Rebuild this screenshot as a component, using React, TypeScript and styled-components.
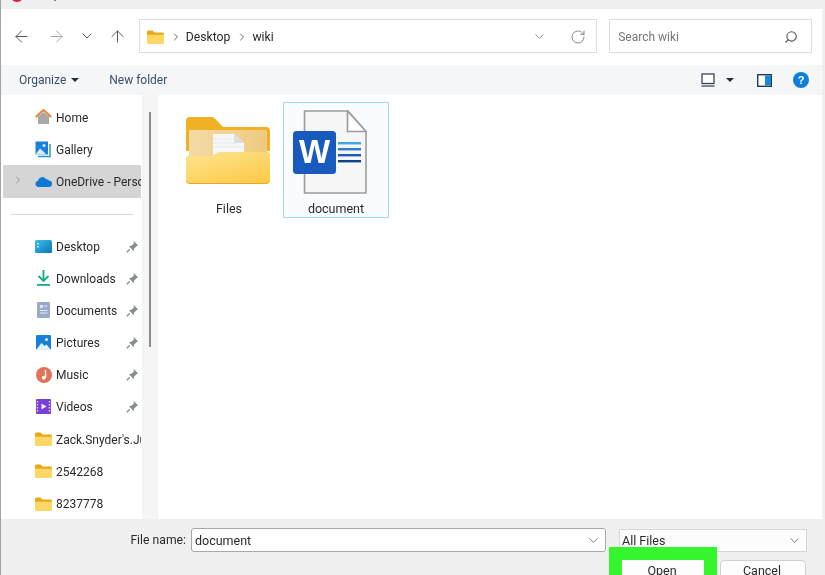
import styled, { createGlobalStyle } from "styled-components";
import { ArrowLeft, ArrowRight, ArrowUp, ChevronDown, ChevronRight, RotateCw, Search } from "lucide-react";

const GlobalStyle = createGlobalStyle`
  html, body {
    margin: 0;
    padding: 0;
    background: #f0f0f0;
  }
  * {
    box-sizing: border-box;
  }
`;

const Window = styled.div`
  position: relative;
  display: flex;
  flex-direction: column;
  width: 825px;
  height: 575px;
  overflow: hidden;
  padding-right: 3px;
  border-left: 1px solid #a2a2a2;
  background: #f0f0f0;
  color: #2a2a2a;
  font-family: Roboto, "Liberation Sans", sans-serif;
  font-size: 12.5px;
  filter: blur(0.35px);
`;

const TitleBar = styled.div`
  display: flex;
  gap: 21px;
  height: 9px;
  overflow: hidden;
  padding-left: 9px;
  background: #f0f0f0;
`;

const AppDot = styled.div`
  width: 14px;
  height: 14px;
  margin-top: -12px;
  border-radius: 50%;
  background: #d81e4a;
`;

const TitleText = styled.div`
  margin-top: -14px;
  line-height: 16px;
`;

const NavRow = styled.div`
  display: flex;
  align-items: center;
  height: 56px;
  padding: 0 10px 2px 0;
  background: #fff;
  font-size: 12px;
`;

const NavButton = styled.div<{ $w: number; $faded?: boolean }>`
  display: flex;
  justify-content: center;
  width: ${(p) => p.$w}px;
  color: ${(p) => (p.$faded ? "#a3a3a3" : "#4f4f4f")};
`;

const AddressBar = styled.div`
  display: flex;
  align-items: center;
  width: 459px;
  height: 34px;
  margin-left: 6px;
  padding: 1px 10px 0 7px;
  border: 1px solid #dedede;
  font-size: 12.2px;
`;

const Crumb = styled.span`
  display: flex;
  margin-left: 6px;
  margin-right: 4px;
`;

const Spacer = styled.div`
  flex: 1;
`;

const RefreshGap = styled.div`
  flex: none;
  width: 23px;
`;

const SearchBox = styled.div`
  display: flex;
  align-items: center;
  justify-content: space-between;
  width: 203px;
  height: 34px;
  margin-left: 12px;
  padding: 1px 13px 0 8px;
  border: 1px solid #dedede;
  color: #777;
`;

const MirroredSearch = styled(Search)`
  transform: scaleX(-1);
`;

const Toolbar = styled.div`
  display: flex;
  align-items: center;
  height: 30px;
  padding: 0 13px 0 18px;
  background: #f5f6f7;
  color: #37506b;
  font-size: 12px;
`;

const ToolLabel = styled.span`
  margin-right: 30px;
  display: flex;
  align-items: center;
  gap: 5px;
`;

const Caret = styled.span`
  width: 0;
  height: 0;
  border-left: 4px solid transparent;
  border-right: 4px solid transparent;
  border-top: 4px solid #1f3147;
`;

const ToolIcons = styled.div`
  display: flex;
  align-items: center;

  ${Caret} {
    margin: 0 23px 0 11px;
  }
`;

const HelpGap = styled.div`
  width: 21px;
`;

const Main = styled.div`
  display: flex;
  flex: 1;
  min-height: 0;
  background: #fff;
`;

const Sidebar = styled.nav`
  width: 141px;
  padding-top: 6px;
  overflow: hidden;
  background: #fff;
  font-size: 12px;
`;

const NavItem = styled.div<{ $selected?: boolean }>`
  position: relative;
  display: flex;
  align-items: center;
  height: 32.2px;
  margin-left: 2px;
  margin-right: 1px;
  padding-left: 32px;
  background: ${(p) => (p.$selected ? "#d5d5d5" : "transparent")};
  white-space: nowrap;
  overflow: hidden;
`;

const ItemIcon = styled.div`
  display: flex;
  flex: none;
  justify-content: center;
  width: 17px;
  margin-right: 4px;
`;

const ItemLabel = styled.span`
  flex: 1;
  min-width: 0;
  padding-top: 1px;
  overflow: hidden;
`;

const Expander = styled.div`
  position: absolute;
  left: 9px;
  top: 9px;
  color: #8a8a8a;
`;

const PinSlot = styled.div`
  flex: none;
  width: 13px;
  margin-left: 3px;
  margin-right: 2px;
  display: flex;
`;

const Separator = styled.div`
  height: 32.4px;
  display: flex;
  align-items: center;
  padding: 2px 8px 0 10px;

  &::after {
    content: "";
    flex: 1;
    height: 1px;
    background: #d9d9d9;
  }
`;

const ScrollTrack = styled.div`
  display: flex;
  justify-content: center;
  width: 16px;
  padding-top: 17px;
  background: #f5f5f5;
`;

const ScrollThumb = styled.div`
  width: 2px;
  height: 235px;
  background: #8b8b8b;
`;

const Files = styled.div`
  display: flex;
  flex: 1;
  align-items: flex-start;
  gap: 1px;
  padding: 7px 0 0 18px;
`;

const Tile = styled.div<{ $selected?: boolean }>`
  display: flex;
  flex-direction: column;
  align-items: center;
  justify-content: space-between;
  width: 106px;
  height: 116px;
  padding-top: ${(p) => (p.$selected ? "7px" : "14px")};
  border: 1px solid ${(p) => (p.$selected ? "#a6d8ef" : "transparent")};
  background: ${(p) => (p.$selected ? "#f8fcfe" : "transparent")};
`;

const TileArt = styled.div<{ $shift: number }>`
  display: flex;
  margin-left: ${(p) => p.$shift}px;
`;

const TileLabel = styled.span`
  line-height: 16px;
`;

const Footer = styled.div`
  display: flex;
  flex-direction: column;
  height: 56px;
  padding-top: 9px;
  background: #f0f0f0;
`;

const FieldRow = styled.div`
  display: flex;
  align-items: center;
  height: 24px;
  padding-left: 129px;
`;

const FieldLabel = styled.label`
  width: 56px;
  margin-right: 5px;
  text-align: right;
  white-space: nowrap;
  font-size: 12.2px;
`;

const NameInput = styled.div`
  display: flex;
  align-items: center;
  justify-content: space-between;
  width: 415px;
  height: 24px;
  padding: 1px 4px 0 3px;
  border: 1px solid #a8a8a8;
  border-radius: 3px;
  background: #fff;
  color: #666;

  span {
    color: #2a2a2a;
  }
`;

const TypeSelect = styled.div`
  display: flex;
  align-items: center;
  justify-content: space-between;
  width: 188px;
  height: 23px;
  margin-left: 13px;
  padding: 0 4px 0 2px;
  border: 1px solid #d6d6d6;
  background: #fcfcfc;
  color: #666;

  span {
    color: #2a2a2a;
  }
`;

const ButtonRow = styled.div`
  display: flex;
  margin-top: 8px;
  padding-left: 621px;
`;

const DialogButton = styled.button<{ $w: number; $highlight?: boolean }>`
  width: ${(p) => p.$w}px;
  height: 22px;
  flex: none;
  padding: 0 2px 2px 0;
  border: 1px solid ${(p) => (p.$highlight ? "#fff" : "#d0d0d0")};
  border-radius: ${(p) => (p.$highlight ? "0" : "4px")};
  background: #fdfdfd;
  color: #2a2a2a;
  font: inherit;
  margin-right: 16px;
  box-shadow: ${(p) => (p.$highlight ? "0 0 0 13px #35f52e" : "none")};
`;

const FolderSmall = () => (
  <svg width="17" height="14" viewBox="0 0 17 14">
    <path d="M0 2a1.500 1.500 0 0 1 1.500-1.500h4l2 2H15.500a1.500 1.500 0 0 1 1.500 1.500V6H0z" fill="#e8a917" />
    <path d="M0 4.800h17v7.700a1.500 1.500 0 0 1-1.500 1.500h-14A1.500 1.500 0 0 1 0 12.500z" fill="#fdd765" />
  </svg>
);

const HomeIcon = () => (
  <svg width="17" height="16" viewBox="0 0 17 16">
    <path d="M3 7.500 8.500 3 14 7.500V15H3z" fill="#a8a8a8" />
    <path d="M0.800 8 8.500 1l7.700 7" fill="none" stroke="#e5853a" strokeWidth="2" />
  </svg>
);

const GalleryIcon = () => (
  <svg width="17" height="17" viewBox="0 0 17 17">
    <rect x="0.500" y="0.500" width="12.500" height="13" fill="#1b80dc" />
    <path d="M0.500 13.500 5 7.500l4 3.500 2 2.500z" fill="#d7ecfb" />
    <circle cx="9" cy="4.500" r="1.500" fill="#d7ecfb" />
    <path d="M15 3v12.500H3" fill="none" stroke="#2b8fe0" strokeWidth="1.500" />
  </svg>
);

const CloudIcon = () => (
  <svg width="17" height="11" viewBox="0 0 17 11">
    <path d="M3.500 11a3.200 3.200 0 0 1-.6-6.300A4.500 4.500 0 0 1 11 3a3.800 3.800 0 0 1 3 1.500A3.200 3.200 0 0 1 17 8c0 1.800-1.300 3-3 3z" fill="#0f78d4" />
  </svg>
);

const DesktopIcon = () => (
  <svg width="17" height="13" viewBox="0 0 17 13">
    <defs>
      <linearGradient id="desk" x1="0" y1="0" x2="1" y2="1">
        <stop offset="0" stopColor="#3cc1e8" />
        <stop offset="1" stopColor="#0c74b8" />
      </linearGradient>
    </defs>
    <rect width="17" height="13" rx="1.500" fill="url(#desk)" />
    <rect x="2" y="3" width="2" height="1.500" fill="#b9e8f6" />
    <rect x="2" y="6" width="2" height="1.500" fill="#b9e8f6" />
  </svg>
);

const DownloadIcon = () => (
  <svg width="15" height="16" viewBox="0 0 15 16">
    <path d="M7.500 0v10M2.500 6l5 5 5-5" fill="none" stroke="#1aa88a" strokeWidth="1.800" />
    <rect x="1" y="14" width="13" height="1.800" fill="#1aa88a" />
  </svg>
);

const DocumentsIcon = () => (
  <svg width="13" height="16" viewBox="0 0 13 16">
    <rect width="13" height="16" rx="1" fill="#98abc8" />
    <rect x="3" y="3" width="3" height="3" fill="#e2e8f2" />
    <path d="M7 4h3.500M3 8.500h7.500M3 11h7.500" stroke="#e2e8f2" strokeWidth="1" />
  </svg>
);

const PicturesIcon = () => (
  <svg width="15" height="15" viewBox="0 0 15 15">
    <rect width="15" height="15" rx="1" fill="#1780dc" />
    <path d="M0 15 5.500 8l3 3 2-1.500L15 15z" fill="#e2f1fc" />
    <circle cx="10.500" cy="4.500" r="1.500" fill="#e2f1fc" />
  </svg>
);

const MusicIcon = () => (
  <svg width="16" height="16" viewBox="0 0 16 16">
    <circle cx="8" cy="8" r="8" fill="#e2735a" />
    <path d="M9.500 3v7.500" stroke="#fff" strokeWidth="1.400" />
    <circle cx="7.800" cy="10.800" r="1.900" fill="#fff" />
  </svg>
);

const VideosIcon = () => (
  <svg width="15" height="15" viewBox="0 0 15 15">
    <rect width="15" height="15" rx="1" fill="#7a3fd6" />
    <path d="M5.500 4.500v6l5-3z" fill="#f3e8ff" />
    <path d="M1.500 2v11M13.500 2v11" stroke="#e4d3fb" strokeWidth="1.400" strokeDasharray="1.500 1.500" />
  </svg>
);

const PinIcon = () => (
  <svg width="13" height="13" viewBox="0 0 12 12">
    <path d="M7 .8 11.200 5l-1.300.6-2.300 2.300-.4 2.400-4.500-4.500 2.400-.4 2.300-2.300z" fill="#868c92" />
    <path d="M3.500 8.500.8 11.200" stroke="#868c92" strokeWidth="1.300" />
  </svg>
);

const FolderLarge = () => (
  <svg width="84" height="67" viewBox="0 0 84 67">
    <defs>
      <linearGradient id="front" x1="0.200" y1="0" x2="0.900" y2="1">
        <stop offset="0" stopColor="#fee28a" />
        <stop offset="1" stopColor="#fcca47" />
      </linearGradient>
      <linearGradient id="inner" x1="0" y1="0" x2="1" y2="0">
        <stop offset="0" stopColor="#f3dba6" />
        <stop offset="1" stopColor="#eeca80" />
      </linearGradient>
    </defs>
    <path d="M0 4a4 4 0 0 1 4-4h22a4 4 0 0 1 3 1.500L37 10h43a4 4 0 0 1 4 4v20H0z" fill="#f0b224" />
    <rect x="3" y="13" width="78" height="30" rx="1" fill="url(#inner)" />
    <path d="M27 17h21l10 9v17H27z" fill="#f7f7f7" />
    <path d="M48 17v9h10z" fill="#dedede" />
    <path d="M27 22h24M27 26h24M27 30h30" stroke="#e6e9ee" strokeWidth="1" />
    <path d="M0 63V43a4 4 0 0 1 4-4h23l6-4h47a4 4 0 0 1 4 4v24a4 4 0 0 1-4 4H4a4 4 0 0 1-4-4z" fill="#e4a92a" />
    <path d="M0 62V43a4 4 0 0 1 4-4h23l6-4h47a4 4 0 0 1 4 4v23a4 4 0 0 1-4 4H4a4 4 0 0 1-4-4z" fill="url(#front)" />
  </svg>
);

const WordFile = () => (
  <svg width="74" height="84" viewBox="0 0 74 84" fontFamily="'Liberation Sans', sans-serif">
    <path d="M11.500 1h43.500L73 21.500V83H11.500z" fill="#f6f6f6" stroke="#9c9c9c" strokeWidth="1.600" />
    <path d="M54.500 1v20.500H73z" fill="#fff" stroke="#9c9c9c" strokeWidth="1.600" />
    <rect x="0" y="21" width="43" height="43" rx="3.500" fill="#185abd" />
    <text x="21.500" y="53" textAnchor="middle" fill="#fff" fontSize="33" fontWeight="700">W</text>
    <rect x="45" y="32" width="23" height="2.400" fill="#41a5ee" />
    <rect x="45" y="38" width="23" height="2.400" fill="#2b7cd3" />
    <rect x="45" y="44" width="23" height="2.400" fill="#185abd" />
    <rect x="45" y="50" width="23" height="2.400" fill="#103f91" />
  </svg>
);

const ViewIcon = () => (
  <svg width="14" height="14" viewBox="0 0 14 14">
    <rect x="1" y="1" width="12" height="9.500" fill="#fff" stroke="#2b3a4a" strokeWidth="1.200" />
    <path d="M0.500 13h13" stroke="#2b3a4a" strokeWidth="1.200" />
  </svg>
);

const PaneIcon = () => (
  <svg width="15" height="13" viewBox="0 0 15 13">
    <rect x="0.700" y="0.700" width="13.600" height="11.600" fill="#fff" stroke="#1f3a5a" strokeWidth="1.400" />
    <rect x="8" y="1.400" width="6" height="10.200" fill="#1e88d8" />
  </svg>
);

const HelpIcon = () => (
  <svg width="16" height="16" viewBox="0 0 16 16" fontFamily="'Liberation Sans', sans-serif">
    <circle cx="8" cy="8" r="8" fill="#0f7fd8" />
    <text x="8" y="12" textAnchor="middle" fill="#fff" fontSize="11" fontWeight="700">?</text>
  </svg>
);

const quickAccess = [
  { label: "Desktop", icon: <DesktopIcon />, pinned: true },
  { label: "Downloads", icon: <DownloadIcon />, pinned: true },
  { label: "Documents", icon: <DocumentsIcon />, pinned: true },
  { label: "Pictures", icon: <PicturesIcon />, pinned: true },
  { label: "Music", icon: <MusicIcon />, pinned: true },
  { label: "Videos", icon: <VideosIcon />, pinned: true },
  { label: "Zack.Snyder's.Justice.League", icon: <FolderSmall /> },
  { label: "2542268", icon: <FolderSmall /> },
  { label: "8237778", icon: <FolderSmall /> },
];

function App() {
  return (
    <Window>
      <GlobalStyle />
      <TitleBar>
        <AppDot />
        <TitleText>Open</TitleText>
      </TitleBar>
      <NavRow>
        <NavButton $w={42}>
          <ArrowLeft size={19} strokeWidth={1.2} />
        </NavButton>
        <NavButton $w={28} $faded>
          <ArrowRight size={19} strokeWidth={1.2} />
        </NavButton>
        <NavButton $w={32}>
          <ChevronDown size={16} strokeWidth={1.4} />
        </NavButton>
        <NavButton $w={30}>
          <ArrowUp size={19} strokeWidth={1.2} />
        </NavButton>
        <AddressBar>
          <FolderSmall />
          <Crumb>
            <ChevronRight size={12} strokeWidth={1.8} color="#555" />
          </Crumb>
          <span>Desktop</span>
          <Crumb>
            <ChevronRight size={12} strokeWidth={1.8} color="#555" />
          </Crumb>
          <span>wiki</span>
          <Spacer />
          <ChevronDown size={15} strokeWidth={1.3} color="#777" />
          <RefreshGap />
          <RotateCw size={16} strokeWidth={1.3} color="#777" />
        </AddressBar>
        <SearchBox>
          <span>Search wiki</span>
          <MirroredSearch size={14} strokeWidth={1.9} color="#555" />
        </SearchBox>
      </NavRow>
      <Toolbar>
        <ToolLabel>
          Organize <Caret />
        </ToolLabel>
        <ToolLabel>New folder</ToolLabel>
        <Spacer />
        <ToolIcons>
          <ViewIcon />
          <Caret />
          <PaneIcon />
          <HelpGap />
          <HelpIcon />
        </ToolIcons>
      </Toolbar>
      <Main>
        <Sidebar>
          <NavItem>
            <ItemIcon>
              <HomeIcon />
            </ItemIcon>
            <ItemLabel>Home</ItemLabel>
          </NavItem>
          <NavItem>
            <ItemIcon>
              <GalleryIcon />
            </ItemIcon>
            <ItemLabel>Gallery</ItemLabel>
          </NavItem>
          <NavItem $selected>
            <Expander>
              <ChevronRight size={12} strokeWidth={1.8} />
            </Expander>
            <ItemIcon>
              <CloudIcon />
            </ItemIcon>
            <ItemLabel>OneDrive - Personal</ItemLabel>
          </NavItem>
          <Separator />
          {quickAccess.map((item) => (
            <NavItem key={item.label}>
              <ItemIcon>{item.icon}</ItemIcon>
              <ItemLabel>{item.label}</ItemLabel>
              {item.pinned && (
                <PinSlot>
                  <PinIcon />
                </PinSlot>
              )}
            </NavItem>
          ))}
        </Sidebar>
        <ScrollTrack>
          <ScrollThumb />
        </ScrollTrack>
        <Files>
          <Tile>
            <TileArt $shift={-2}>
              <FolderLarge />
            </TileArt>
            <TileLabel>Files</TileLabel>
          </Tile>
          <Tile $selected>
            <TileArt $shift={-12}>
              <WordFile />
            </TileArt>
            <TileLabel>document</TileLabel>
          </Tile>
        </Files>
      </Main>
      <Footer>
        <FieldRow>
          <FieldLabel>File name:</FieldLabel>
          <NameInput>
            <span>document</span>
            <ChevronDown size={15} strokeWidth={1.3} />
          </NameInput>
          <TypeSelect>
            <span>All Files</span>
            <ChevronDown size={15} strokeWidth={1.3} />
          </TypeSelect>
        </FieldRow>
        <ButtonRow>
          <DialogButton $w={82} $highlight>
            Open
          </DialogButton>
          <DialogButton $w={86}>Cancel</DialogButton>
        </ButtonRow>
      </Footer>
    </Window>
  );
}

export default App;
